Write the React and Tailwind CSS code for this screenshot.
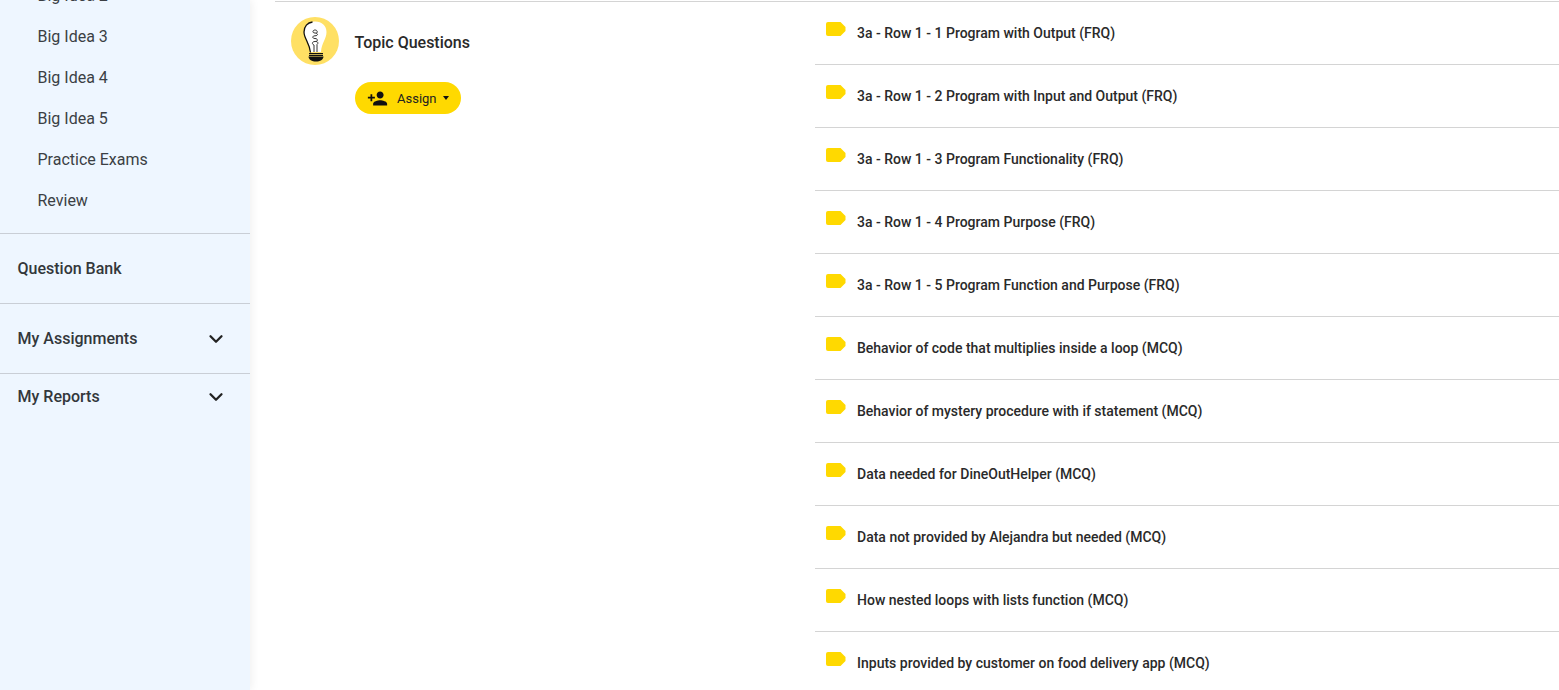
import React from 'react';
import { ChevronDown } from 'lucide-react';

const ideas = ['Big Idea 2', 'Big Idea 3', 'Big Idea 4', 'Big Idea 5', 'Practice Exams', 'Review'];

const topics = [
  '3a - Row 1 - 1 Program with Output (FRQ)',
  '3a - Row 1 - 2 Program with Input and Output (FRQ)',
  '3a - Row 1 - 3 Program Functionality (FRQ)',
  '3a - Row 1 - 4 Program Purpose (FRQ)',
  '3a - Row 1 - 5 Program Function and Purpose (FRQ)',
  'Behavior of code that multiplies inside a loop (MCQ)',
  'Behavior of mystery procedure with if statement (MCQ)',
  'Data needed for DineOutHelper (MCQ)',
  'Data not provided by Alejandra but needed (MCQ)',
  'How nested loops with lists function (MCQ)',
  'Inputs provided by customer on food delivery app (MCQ)',
];

const TagIcon = () => (
  <svg width="20" height="14" viewBox="0 0 20 14" className="shrink-0">
    <path d="M2 0H14.500L19.500 5V9L14.500 14H2Q0 14 0 12V2Q0 0 2 0Z" fill="#ffd900" />
  </svg>
);

const BulbIcon = () => (
  <svg width="48" height="48" viewBox="0 0 48 48" className="shrink-0">
    <circle cx="24" cy="24" r="24" fill="#ffe064" />
    <path d="M24 4.500C17 4.500 13 9.500 13 15C13 21 18.500 25 19.500 35H30C30.500 26 35.500 22 35.500 15C35.500 9 31 4.500 24 4.500Z" fill="#fff" />
    <path d="M19.500 35.500C18.500 26 13 21.500 13 15C13 9.500 16.500 5.500 21.500 5" fill="none" stroke="#111" strokeWidth="1.300" />
    <path d="M23 35V28C20.500 27 21 24.500 24 24.500C27.500 24.500 27 21.500 24 21.500C21 21.500 21 18.800 24 18.800C27.500 18.800 27 16 24 16C21 16 21.500 13 24 13C26.500 13 27 15.500 25 16.500M26 35V27.500C27.500 26.500 27 24.500 25 24.500" fill="none" stroke="#333" strokeWidth="1" />
    <path d="M18 36H32V37.200H18ZM18 38H32V39H18Z" fill="#111" />
    <path d="M17.500 39.500H32.500C32.500 42.500 29 44.500 25 44.500C21 44.500 17.500 42.500 17.500 39.500Z" fill="#111" />
  </svg>
);

const PersonAddIcon = () => (
  <svg width="21" height="21" viewBox="0 0 24 24" fill="#111" className="shrink-0">
    <path d="M15 12c2.210 0 4-1.790 4-4s-1.790-4-4-4-4 1.790-4 4 1.790 4 4 4zm-9-2V7H4v3H1v2h3v3h2v-3h3v-2H6zm9 4c-2.670 0-8 1.340-8 4v2h16v-2c0-2.660-5.330-4-8-4z" />
  </svg>
);

const Sidebar = () => (
  <aside className="w-[250px] h-full shrink-0 overflow-hidden bg-[#eef6ff] shadow-[2px_0_8px_rgba(0,0,0,0.06)] text-[#3b3f44]">
    <ul className="-mt-[25px] pb-[12px] border-b border-[#c9ced6]">
      {ideas.map((idea) => (
        <li key={idea} className="h-[41px] pl-[37.5px] flex items-center text-base">
          {idea}
        </li>
      ))}
    </ul>
    <div className="h-[70px] pl-[17.5px] flex items-center border-b border-[#c9ced6] text-base font-medium text-[#33373b]">
      Question Bank
    </div>
    <div className="h-[70px] pl-[17.5px] pr-[23px] flex items-center justify-between border-b border-[#c9ced6] text-base font-medium text-[#33373b]">
      My Assignments
      <ChevronDown size={22} strokeWidth={2.5} className="text-[#222]" />
    </div>
    <div className="h-[46px] pl-[17.5px] pr-[23px] flex items-center justify-between text-base font-medium text-[#33373b]">
      My Reports
      <ChevronDown size={22} strokeWidth={2.5} className="text-[#222]" />
    </div>
  </aside>
);

export default function App() {
  return (
    <div className="flex h-[690px] overflow-hidden bg-white font-['Roboto',sans-serif]">
      <Sidebar />
      <main className="flex-1 min-w-0 ml-[25px] border-t border-[#d4d4d4] mt-px flex">
        <section className="w-[540px] shrink-0 pl-4 pt-[15px]">
          <div className="flex items-center gap-[15.5px]">
            <BulbIcon />
            <h2 className="mt-1 text-base font-medium text-[#2a2a2a]">Topic Questions</h2>
          </div>
          <button className="mt-[17px] ml-[64px] w-[106px] h-8 rounded-full bg-[#ffd900] flex items-center pl-3 text-[13px] text-[#222]">
            <PersonAddIcon />
            <span className="ml-[9px] mt-px">Assign</span>
            <span className="ml-[6px] border-x-[3.500px] border-x-transparent border-t-[4px] border-t-[#111]" />
          </button>
        </section>
        <ul className="flex-1 min-w-0">
          {topics.map((topic) => (
            <li key={topic} className="h-[63px] pl-[11px] pb-px flex items-center gap-[11px] border-b border-[#d4d4d4] text-sm font-medium text-[#2a2a2a]">
              <span className="-mt-[7px] flex">
                <TagIcon />
              </span>
              <span>{topic}</span>
            </li>
          ))}
        </ul>
      </main>
    </div>
  );
}
